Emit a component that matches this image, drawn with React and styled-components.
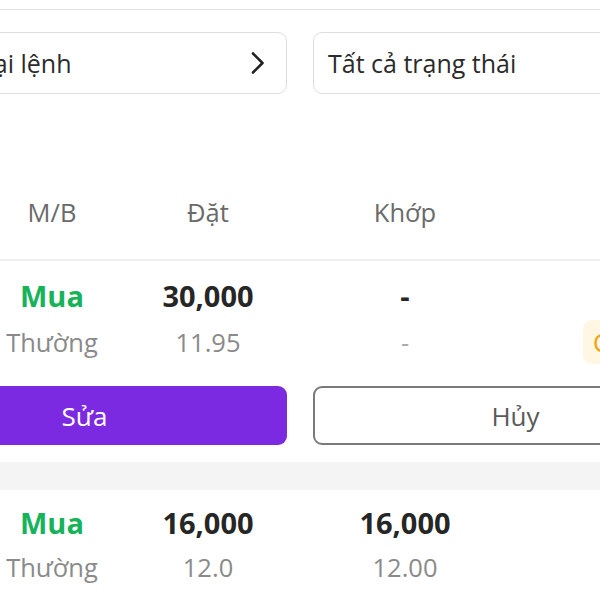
import React from "react";
import styled, { createGlobalStyle } from "styled-components";

const Global = createGlobalStyle`
  html, body { margin: 0; padding: 0; background: #fff; overflow: hidden; }
  body { font-family: "Open Sans", "Noto Sans", sans-serif; color: #222; }
`;

const Page = styled.div`
  width: 600px;
  height: 600px;
  overflow: hidden;
  background: #fff;
`;

const TopBar = styled.div`
  height: 9px;
  border-bottom: 1px solid #e2e2e2;
`;

const Wide = styled.div`
  margin-left: -118px;
  width: 836px;
`;

const Filters = styled(Wide)`
  display: grid;
  grid-template-columns: 1fr 1fr;
  gap: 26px;
  margin-top: 22px;
`;

const FilterBox = styled.div`
  height: 62px;
  box-sizing: border-box;
  border: 1px solid #dedede;
  border-radius: 9px;
  display: flex;
  align-items: center;
  justify-content: space-between;
  padding: 0 20px 0 14px;
  font-size: 25px;
  color: #2b2b2b;
  white-space: nowrap;
`;

const Table = styled(Wide)`
  margin-top: 71px;
`;

const Grid = styled.div`
  display: grid;
  grid-template-columns: 92px 156px 156px 238px 194px;
  align-items: center;
`;

const Header = styled(Grid)`
  height: 96px;
  border-bottom: 2px solid #f0f0f0;
  box-sizing: border-box;
  font-size: 25.5px;
  color: #6a6a6a;
`;

const Cell = styled.div`
  text-align: center;
  white-space: nowrap;
`;

const StatusCell = styled.div`
  display: flex;
  justify-content: flex-start;
  padding-left: 59px;
`;

const Order = styled.div`
  padding: ${(p) => (p.$first ? "14px" : "12px")} 0 17px;
`;

const Line = styled(Grid)`
  height: 40px;
  & + & { margin-top: 5px; }
`;

const Main = styled(Cell)`
  font-size: 29px;
  font-weight: 700;
  color: ${(p) => (p.$side ? "#17b35a" : "#262626")};
`;

const Sub = styled(Cell)`
  font-size: 25.5px;
  color: ${(p) => (p.$faint ? "#a8a8a8" : "#8a8a8a")};
`;

const Badge = styled.span`
  display: inline-flex;
  align-items: center;
  height: 44px;
  padding: 0 10px;
  border-radius: 9px;
  background: #fff6e3;
  color: #f2a20a;
  font-size: 25px;
  white-space: nowrap;
`;

const Actions = styled.div`
  display: grid;
  grid-template-columns: 1fr 1fr;
  gap: 26px;
  margin-top: 26px;
`;

const Button = styled.button`
  height: 59px;
  box-sizing: border-box;
  border-radius: 9px;
  font-family: inherit;
  font-size: 26px;
  font-weight: 500;
  cursor: pointer;
  border: ${(p) => (p.$primary ? "none" : "2px solid #7a7a7a")};
  background: ${(p) => (p.$primary ? "#7c2ae1" : "#fff")};
  color: ${(p) => (p.$primary ? "#fff" : "#5a5a5a")};
`;

const Band = styled.div`
  height: 28px;
  background: #f4f4f4;
`;

const Chevron = () => (
  <svg width="16" height="24" viewBox="0 0 16 24" fill="none">
    <path d="M3 2.5 L12.5 12 L3 21.5" stroke="#222" strokeWidth="2.6" strokeLinecap="round" strokeLinejoin="round" />
  </svg>
);

const orders = [
  { qty: "30,000", price: "11.95", matchQty: "-", matchPrice: "-", actions: true, status: "Chờ khớp" },
  { qty: "16,000", price: "12.0", matchQty: "16,000", matchPrice: "12.00", actions: false, status: "" },
];

export default function App() {
  return (
    <Page>
      <Global />
      <TopBar />
      <Filters>
        <FilterBox>
          <span>Tất cả loại lệnh</span>
          <Chevron />
        </FilterBox>
        <FilterBox>
          <span>Tất cả trạng thái</span>
        </FilterBox>
      </Filters>
      <Table>
        <Header>
          <Cell />
          <Cell>M/B</Cell>
          <Cell>Đặt</Cell>
          <Cell>Khớp</Cell>
          <Cell />
        </Header>
        {orders.map((o, i) => (
          <React.Fragment key={i}>
            {i > 0 && <Band />}
            <Order $first={i === 0}>
              <Line>
                <Cell />
                <Main $side>Mua</Main>
                <Main>{o.qty}</Main>
                <Main>{o.matchQty}</Main>
                <Cell />
              </Line>
              <Line>
                <Cell />
                <Sub>Thường</Sub>
                <Sub>{o.price}</Sub>
                <Sub $faint={o.matchPrice === "-"}>{o.matchPrice}</Sub>
                <StatusCell>{o.status && <Badge>{o.status}</Badge>}</StatusCell>
              </Line>
              {o.actions && (
                <Actions>
                  <Button $primary>Sửa</Button>
                  <Button>Hủy</Button>
                </Actions>
              )}
            </Order>
          </React.Fragment>
        ))}
      </Table>
    </Page>
  );
}
